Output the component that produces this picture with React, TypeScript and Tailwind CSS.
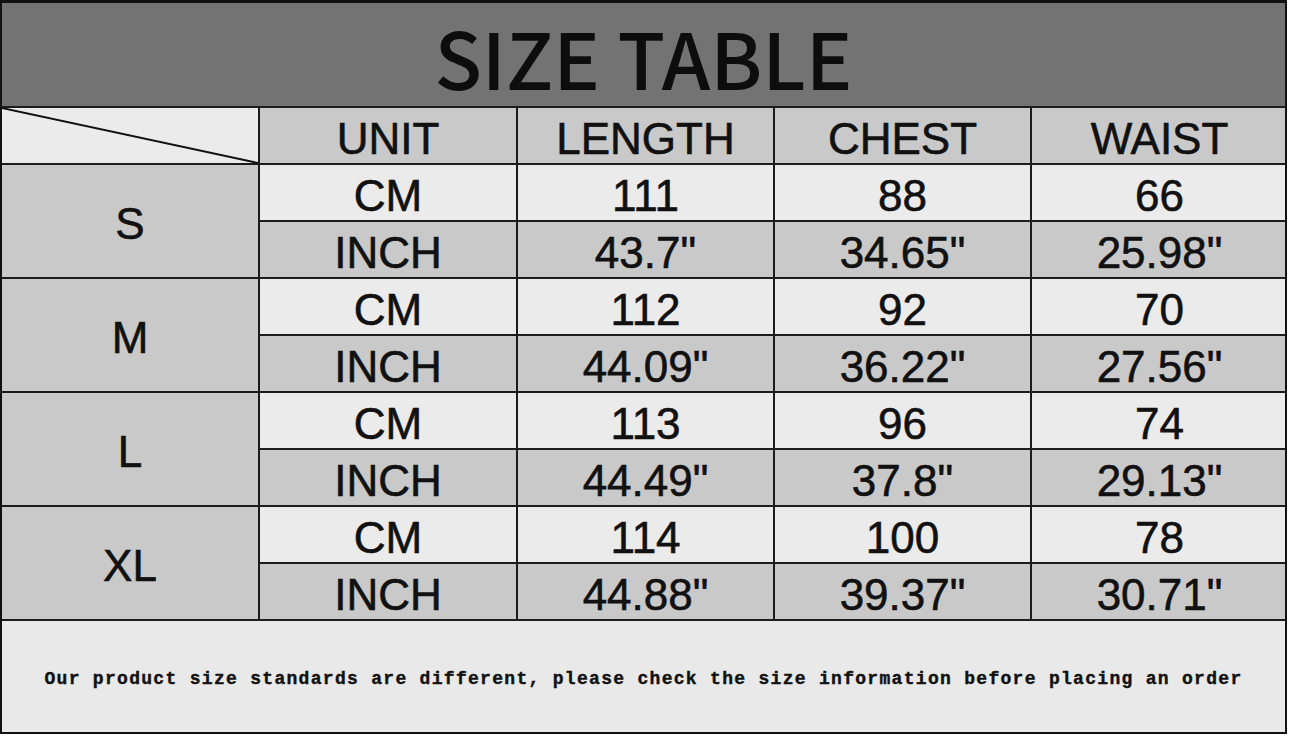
import React from "react";

const rows = [
  { size: "S", cm: ["111", "88", "66"], inch: ['43.7"', '34.65"', '25.98"'] },
  { size: "M", cm: ["112", "92", "70"], inch: ['44.09"', '36.22"', '27.56"'] },
  { size: "L", cm: ["113", "96", "74"], inch: ['44.49"', '37.8"', '29.13"'] },
  { size: "XL", cm: ["114", "100", "78"], inch: ['44.88"', '39.37"', '30.71"'] },
];

const cell = "border-2 border-[#1c1c1c] text-center align-middle p-0 pt-[6px] h-[57px] leading-none";

const App = () => {
  return (
    <div className="w-[1290px] h-[736px] bg-white">
      <div className="w-[1287px] h-[734px] border-2 border-t-[3px] border-[#111] bg-[#e9e9e9] flex flex-col overflow-hidden">
        {/* Title */}
        <div className="h-[103px] bg-[#737373] flex items-center justify-center pt-[2px]">
          <h1
            className="text-[78px] font-medium text-[#0d0d0d] leading-[88px]"
            style={{ fontFamily: '"Noto Sans CJK SC", "Noto Sans", sans-serif' }}
          >
            SIZE TABLE
          </h1>
        </div>

        {/* Table */}
        <table
          className="w-[1287px] -ml-[2px] border-collapse table-fixed text-[44px] text-[#111]"
          style={{ fontFamily: '"Liberation Sans", Arial, sans-serif', WebkitTextStroke: "0.6px #111" }}
        >
          <colgroup>
            <col className="w-[258px]" />
            <col className="w-[258px]" />
            <col className="w-[257px]" />
            <col className="w-[257px]" />
            <col className="w-[257px]" />
          </colgroup>
          <thead>
            <tr>
              <th className={`${cell} bg-[#ebebeb] relative`}>
                <svg className="absolute inset-0 w-full h-full" viewBox="0 0 258 57" preserveAspectRatio="none">
                  <line x1="0" y1="0" x2="258" y2="57" stroke="#111" strokeWidth="2" />
                </svg>
              </th>
              {["UNIT", "LENGTH", "CHEST", "WAIST"].map((h) => (
                <th key={h} className={`${cell} bg-[#c9c9c9] font-normal`}>
                  {h}
                </th>
              ))}
            </tr>
          </thead>
          <tbody>
            {rows.map((r) => (
              <React.Fragment key={r.size}>
                <tr>
                  <td rowSpan={2} className={`${cell} bg-[#c9c9c9]`}>
                    {r.size}
                  </td>
                  <td className={`${cell} bg-[#ebebeb]`}>CM</td>
                  {r.cm.map((v, i) => (
                    <td key={i} className={`${cell} bg-[#ebebeb]`}>
                      {v}
                    </td>
                  ))}
                </tr>
                <tr>
                  <td className={`${cell} bg-[#c9c9c9]`}>INCH</td>
                  {r.inch.map((v, i) => (
                    <td key={i} className={`${cell} bg-[#c9c9c9]`}>
                      {v}
                    </td>
                  ))}
                </tr>
              </React.Fragment>
            ))}
          </tbody>
        </table>

        {/* Note */}
        <div className="flex-1 flex items-center justify-center bg-[#e9e9e9] pt-[6px]">
          <p
            className="text-[18px] font-bold text-[#111] tracking-[1.3px] whitespace-nowrap"
            style={{ fontFamily: '"Liberation Mono", "Courier New", monospace', WebkitTextStroke: "0.4px #111" }}
          >
            Our product size standards are different, please check the size information before placing an order
          </p>
        </div>
      </div>
    </div>
  );
};

export default App;
